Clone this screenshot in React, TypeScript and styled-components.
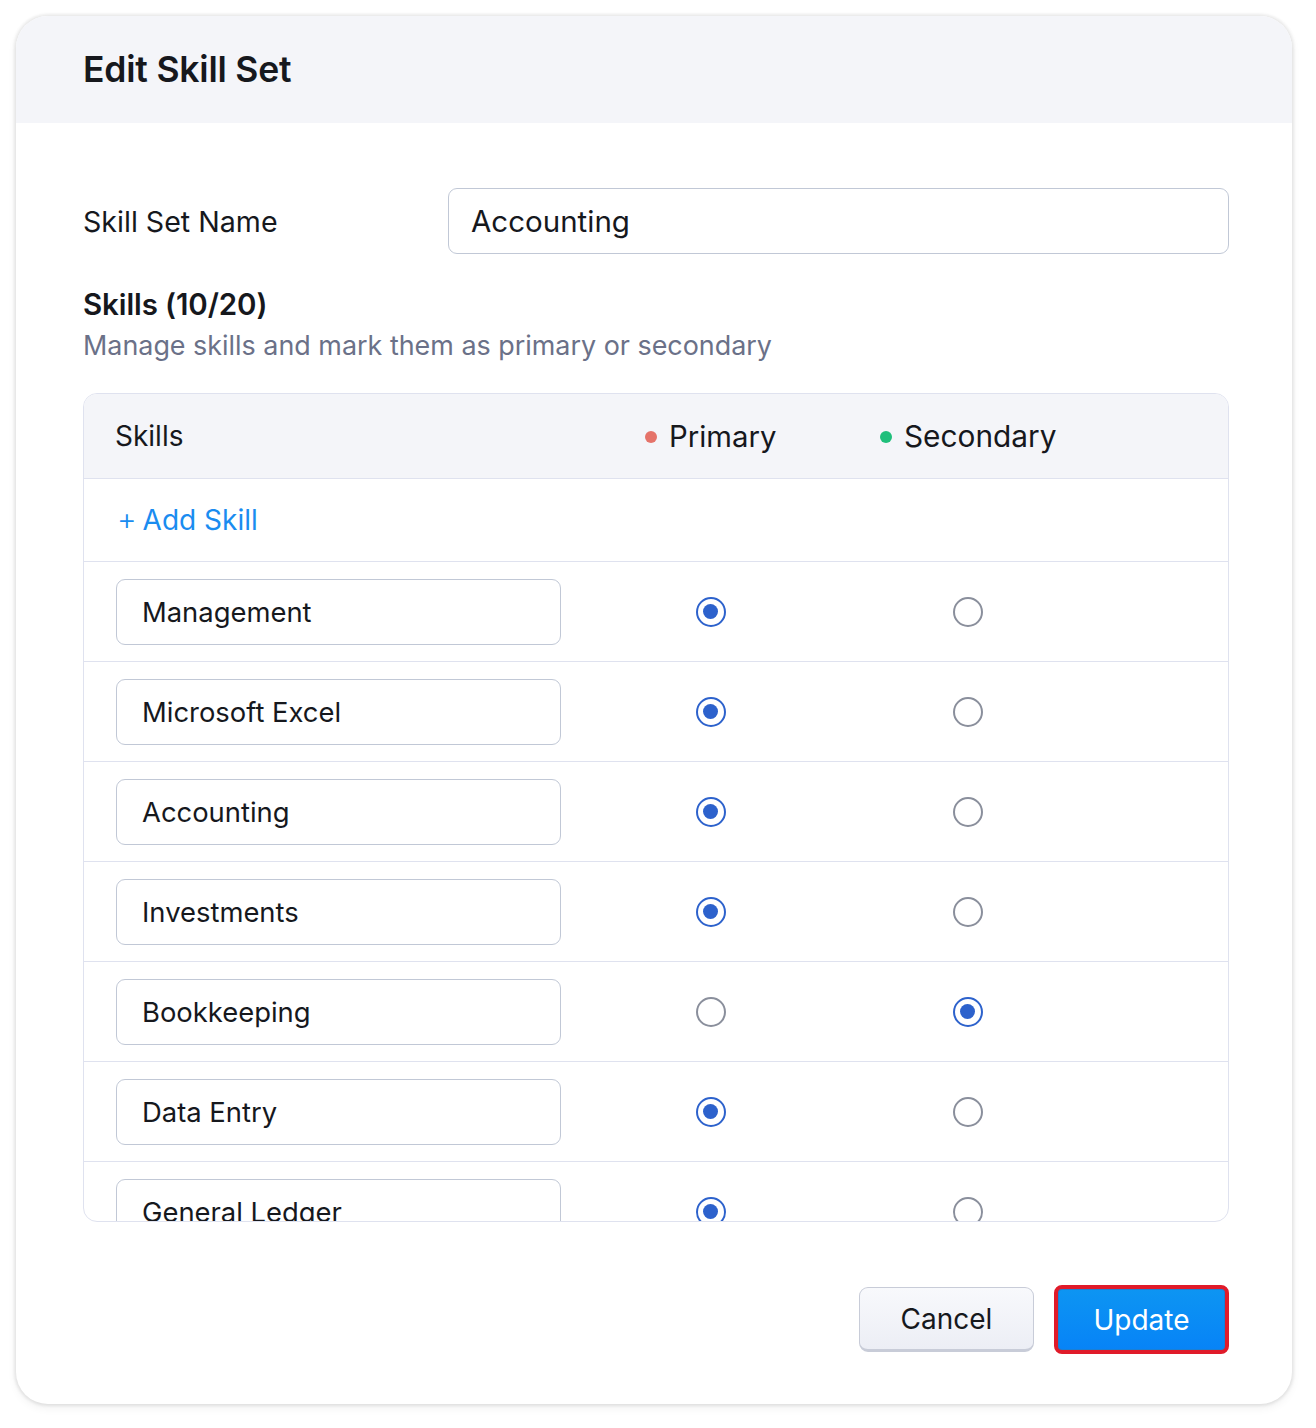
import React from "react";
import styled, { createGlobalStyle } from "styled-components";

const Global = createGlobalStyle`
  html, body { margin: 0; padding: 0; background: #ffffff; }
  body { font-family: Inter, "Noto Sans", sans-serif; color: #16181d; }
  * { box-sizing: border-box; }
`;

const Page = styled.div`
  width: 1316px;
  height: 1428px;
  padding: 16px 24px 24px 16px;
`;

const Card = styled.div`
  width: 1276px;
  height: 1388px;
  background: #ffffff;
  border-radius: 32px;
  overflow: hidden;
  box-shadow: 0 0 3px 2px rgba(0, 0, 0, 0.08), 0 4px 10px rgba(0, 0, 0, 0.06);
  display: flex;
  flex-direction: column;
`;

const Header = styled.div`
  height: 107px;
  background: #f4f5f9;
  display: flex;
  align-items: center;
  padding: 0 67px;
  flex-shrink: 0;
`;

const Title = styled.h1`
  margin: 0;
  font-size: 35.5px;
  font-weight: 600;
  letter-spacing: -0.2px;
  color: #16181d;
`;

const Body = styled.div`
  padding: 65px 63px 0 67px;
  display: flex;
  flex-direction: column;
  flex: 1;
`;

const FieldRow = styled.div`
  display: flex;
  align-items: center;
  height: 66px;
`;

const FieldLabel = styled.label`
  width: 365px;
  font-size: 28.6px;
  color: #16181d;
`;

const TextBox = styled.div<{ $w?: number; $fs?: number }>`
  flex: ${(p) => (p.$w ? "none" : "1")};
  width: ${(p) => (p.$w ? `${p.$w}px` : "auto")};
  height: 66px;
  border: 1.5px solid #c1c8d6;
  border-radius: 9px;
  display: flex;
  align-items: center;
  padding-left: ${(p) => (p.$w ? 25 : 22)}px;
  font-size: ${(p) => p.$fs ?? 27.4}px;
  color: #16181d;
  background: #fff;
`;

const SectionTitle = styled.div`
  margin-top: 32px;
  font-size: 29.5px;
  font-weight: 600;
  letter-spacing: -0.1px;
  line-height: 36px;
`;

const SectionSub = styled.div`
  margin-top: 6px;
  font-size: 26.9px;
  color: #6b7188;
  line-height: 34px;
`;

const Table = styled.div`
  margin-top: 31px;
  border: 1.5px solid #dfe2ef;
  border-radius: 14px;
  overflow: hidden;
  height: 829px;
  display: flex;
  flex-direction: column;
`;

const Grid = styled.div`
  display: grid;
  grid-template-columns: 498px 257px 257px 1fr;
  align-items: center;
`;

const HeadRow = styled(Grid)`
  height: 85px;
  background: #f4f5f9;
  border-bottom: 1.5px solid #dfe2ef;
  flex-shrink: 0;
  font-size: 28px;
`;

const HeadCell = styled.div<{ $pad?: number; $fs?: number }>`
  padding-left: ${(p) => p.$pad ?? 0}px;
  font-size: ${(p) => p.$fs ?? 28}px;
  display: flex;
  align-items: center;
  gap: 12px;
  white-space: nowrap;
`;

const Dot = styled.span<{ $c: string }>`
  width: 12px;
  height: 12px;
  border-radius: 50%;
  background: ${(p) => p.$c};
  margin-top: 2px;
  flex-shrink: 0;
`;

const AddRow = styled.div`
  height: 83px;
  border-bottom: 1.5px solid #dfe2ef;
  display: flex;
  align-items: center;
  padding-left: 33px;
  flex-shrink: 0;
`;

const AddLink = styled.span`
  color: #1a8cf0;
  font-size: 28px;
  display: flex;
  align-items: center;
  gap: 6px;
`;

const Plus = styled.span`
  font-weight: 300;
  font-size: 30px;
  margin-top: -2px;
`;

const Scroll = styled.div`
  flex: 1;
  overflow: hidden;
`;

const SkillRow = styled(Grid)`
  height: 100px;
  border-bottom: 1.5px solid #dfe2ef;
  align-items: center;
`;

const CellInput = styled.div`
  padding-left: 32px;
`;

const CellRadio = styled.div`
  display: flex;
  justify-content: center;
`;

const Radio = styled.span<{ $on: boolean }>`
  width: 30px;
  height: 30px;
  border-radius: 50%;
  border: 2px solid ${(p) => (p.$on ? "#2d62cc" : "#8a8f9c")};
  display: flex;
  align-items: center;
  justify-content: center;
  &::after {
    content: "";
    width: 15px;
    height: 15px;
    border-radius: 50%;
    background: ${(p) => (p.$on ? "#2d62cc" : "transparent")};
  }
`;

const Footer = styled.div`
  margin-top: 63px;
  display: flex;
  justify-content: flex-end;
  gap: 20px;
`;

const CancelBtn = styled.button`
  width: 175px;
  height: 65px;
  border-radius: 9px;
  border: 1.5px solid #c8ccd8;
  border-bottom-width: 3px;
  background: linear-gradient(#f8f9fc, #eceef5);
  font-family: inherit;
  font-size: 28px;
  color: #16181d;
  margin-top: 2px;
`;

const UpdateBtn = styled.button`
  width: 175px;
  height: 69px;
  border-radius: 8px;
  border: 4px solid #e01b2a;
  background: linear-gradient(#0d95f2, #0783f7);
  box-shadow: inset 0 0 0 1px #1a7fd6;
  font-family: inherit;
  font-size: 28px;
  color: #ffffff;
`;

const skills: { name: string; primary: boolean }[] = [
  { name: "Management", primary: true },
  { name: "Microsoft Excel", primary: true },
  { name: "Accounting", primary: true },
  { name: "Investments", primary: true },
  { name: "Bookkeeping", primary: false },
  { name: "Data Entry", primary: true },
  { name: "General Ledger", primary: true },
];

export default function App() {
  return (
    <>
      <Global />
      <Page>
        <Card>
          <Header>
            <Title>Edit Skill Set</Title>
          </Header>
          <Body>
            <FieldRow>
              <FieldLabel>Skill Set Name</FieldLabel>
              <TextBox $fs={29.5}>Accounting</TextBox>
            </FieldRow>
            <SectionTitle>Skills (10/20)</SectionTitle>
            <SectionSub>Manage skills and mark them as primary or secondary</SectionSub>
            <Table>
              <HeadRow>
                <HeadCell $pad={31}>Skills</HeadCell>
                <HeadCell $pad={63} $fs={29.3}>
                  <Dot $c="#e5736a" />
                  Primary
                </HeadCell>
                <HeadCell $pad={41} $fs={29.8}>
                  <Dot $c="#1fbf7b" />
                  Secondary
                </HeadCell>
                <div />
              </HeadRow>
              <AddRow>
                <AddLink>
                  <Plus>+</Plus>Add Skill
                </AddLink>
              </AddRow>
              <Scroll>
                {skills.map((s) => (
                  <SkillRow key={s.name}>
                    <CellInput>
                      <TextBox $w={445}>{s.name}</TextBox>
                    </CellInput>
                    <CellRadio>
                      <Radio $on={s.primary} />
                    </CellRadio>
                    <CellRadio>
                      <Radio $on={!s.primary} />
                    </CellRadio>
                    <div />
                  </SkillRow>
                ))}
              </Scroll>
            </Table>
            <Footer>
              <CancelBtn>Cancel</CancelBtn>
              <UpdateBtn>Update</UpdateBtn>
            </Footer>
          </Body>
        </Card>
      </Page>
    </>
  );
}
